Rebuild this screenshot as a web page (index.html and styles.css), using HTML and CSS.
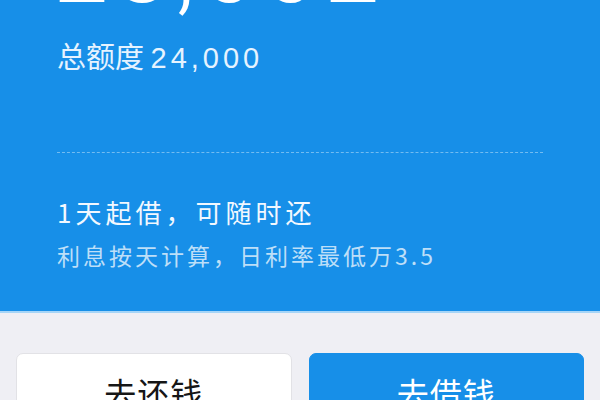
FILE: index.html
```html
<!DOCTYPE html>
<html lang="zh-CN">
<head>
<meta charset="utf-8">
<title>借钱</title>
<link rel="stylesheet" href="styles.css">
</head>
<body>
<section class="hero">
  <div class="big">23,002</div>
  <div class="total"><span class="cjk">总额度</span> <span class="num">24,000</span></div>
  <div class="divider"></div>
  <div class="feature">1天起借，可随时还</div>
  <div class="note">利息按天计算，日利率最低万3.5</div>
</section>
<div class="actions">
  <div class="btn btn-light" role="button">去还钱</div>
  <div class="btn btn-primary" role="button">去借钱</div>
</div>
</body>
</html>
```

FILE: styles.css
```css
html, body {
  margin: 0;
  padding: 0;
}
body {
  width: 600px;
  height: 400px;
  overflow: hidden;
  background: #efeff4;
  font-family: "Noto Sans CJK SC", "Noto Sans", sans-serif;
}
.hero {
  background: #178fe8;
  height: 311px;
  padding: 0 57px 0 57px;
  border-bottom: 2px solid #a6d5f7;
  overflow: hidden;
  color: #fff;
}
.big {
  font-family: Roboto, "Liberation Sans", sans-serif;
  font-weight: 300;
  font-size: 100px;
  line-height: 100px;
  letter-spacing: 6px;
  margin-top: -82px;
  margin-left: -4px;
  white-space: nowrap;
}
.total {
  margin-top: 19px;
  font-size: 29px;
  line-height: 36px;
  color: #e6f3ff;
  white-space: nowrap;
}
.total .num {
  font-family: "Liberation Sans", Arial, sans-serif;
  letter-spacing: 4px;
}
.divider {
  margin-top: 76px;
  border-top: 1px dashed rgba(255, 255, 255, 0.4);
}
.feature {
  margin-top: 42px;
  font-size: 26px;
  line-height: 34px;
  letter-spacing: 4px;
  color: #f2f8ff;
  white-space: nowrap;
}
.note {
  margin-top: 11px;
  font-size: 23px;
  line-height: 30px;
  letter-spacing: 3px;
  color: rgba(255, 255, 255, 0.72);
  white-space: nowrap;
}
.actions {
  display: flex;
  align-items: flex-start;
  gap: 17px;
  padding: 40px 16px 0 16px;
}
.btn {
  flex: 1;
  height: 90px;
  border-radius: 7px;
  padding-top: 16px;
  font-size: 32px;
  line-height: 44px;
  letter-spacing: 1px;
  text-align: center;
  box-sizing: border-box;
}
.btn-light {
  background: #ffffff;
  color: #161616;
  border: 1px solid #e2e2e6;
}
.btn-primary {
  background: #178fe8;
  color: #ffffff;
  border: 1px solid #178fe8;
}
```
